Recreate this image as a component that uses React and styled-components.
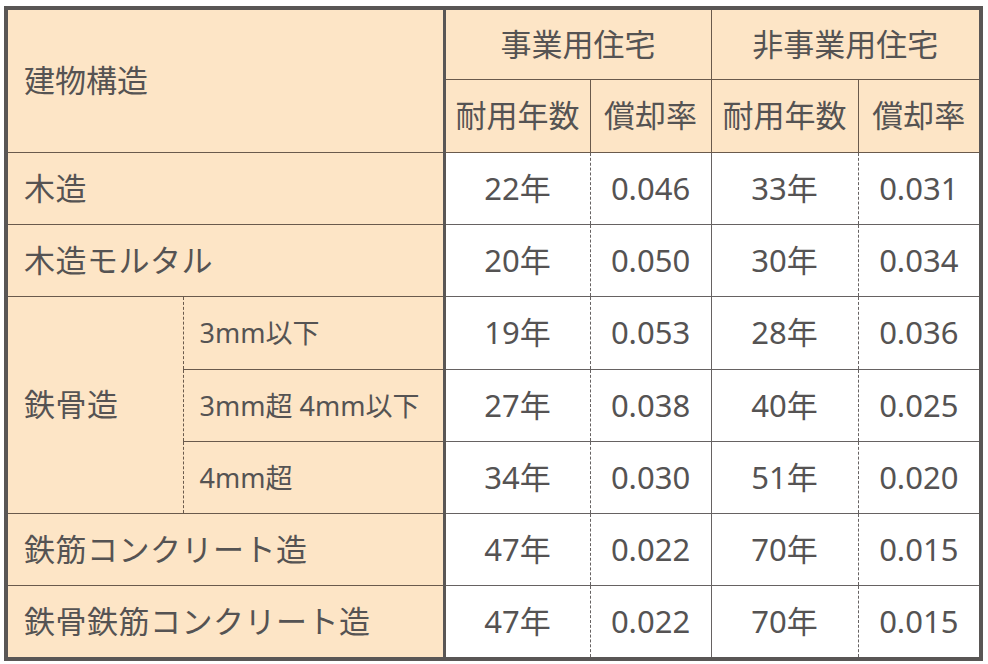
import React from 'react';
import styled, { createGlobalStyle } from 'styled-components';

const GlobalStyle = createGlobalStyle`
  html, body {
    margin: 0;
    padding: 0;
    background: #ffffff;
  }
  body {
    font-family: "Noto Sans", "Noto Sans CJK JP", sans-serif;
    color: #555353;
  }
`;

const Wrapper = styled.div`
  padding: 6px 0 0 4px;
  width: 988px;
  height: 664px;
  box-sizing: border-box;
`;

const Table = styled.table`
  border-collapse: collapse;
  table-layout: fixed;
  width: 975px;
  border: 4px solid #595655;
`;

const Row = styled.tr`
  height: ${props => props.h || 72}px;
`;

const Head = styled.th`
  background: #fde5c6;
  font-weight: normal;
  font-size: 31px;
  text-align: ${props => (props.left ? 'left' : 'center')};
  padding: ${props => (props.left ? '0 0 0 16px' : '0')};
  border: 1px solid #6a5a4c;
  border-right: ${props =>
    props.thick ? '3px solid #595655' : props.dashed ? '1px dashed #6a5a4c' : '1px solid #6a5a4c'};
  line-height: 1;
`;

const Label = styled.td`
  background: #fde5c6;
  font-size: ${props => (props.sub ? 27 : 31)}px;
  letter-spacing: ${props => (props.sub ? 0 : 0.5)}px;
  padding: 0 0 0 16px;
  border-top: 1px solid #6a5a4c;
  border-bottom: 1px solid #6a5a4c;
  border-left: ${props => (props.inner ? '1px dashed #6a5a4c' : 'none')};
  border-right: ${props => (props.thick ? '3px solid #595655' : '1px dashed #6a5a4c')};
  white-space: nowrap;
  line-height: 1;
`;

const Cell = styled.td`
  background: #ffffff;
  font-size: 31px;
  text-align: center;
  border-top: 1px solid #666262;
  border-bottom: 1px solid #666262;
  border-right: ${props => (props.dashed ? '1px dashed #666262' : '1px solid #666262')};
  line-height: 1;
`;

const rows = [
  { label: '木造', h: 72, values: ['22年', '0.046', '33年', '0.031'] },
  { label: '木造モルタル', h: 72, values: ['20年', '0.050', '30年', '0.034'] },
  { label: '鉄骨造', sub: '3mm以下', span: 3, h: 73, values: ['19年', '0.053', '28年', '0.036'] },
  { sub: '3mm超 4mm以下', h: 72, values: ['27年', '0.038', '40年', '0.025'] },
  { sub: '4mm超', h: 72, values: ['34年', '0.030', '51年', '0.020'] },
  { label: '鉄筋コンクリート造', h: 72, values: ['47年', '0.022', '70年', '0.015'] },
  { label: '鉄骨鉄筋コンクリート造', h: 74, values: ['47年', '0.022', '70年', '0.015'] },
];

const DataCells = ({ values }) => (
  <>
    <Cell dashed>{values[0]}</Cell>
    <Cell>{values[1]}</Cell>
    <Cell dashed>{values[2]}</Cell>
    <Cell>{values[3]}</Cell>
  </>
);

const App = () => (
  <>
    <GlobalStyle />
    <Wrapper>
      <Table>
        <colgroup>
          <col style={{ width: 177 }} />
          <col style={{ width: 261 }} />
          <col style={{ width: 146 }} />
          <col style={{ width: 121 }} />
          <col style={{ width: 147 }} />
          <col style={{ width: 123 }} />
        </colgroup>
        <thead>
          <Row h={71}>
            <Head left colSpan={2} rowSpan={2} thick>建物構造</Head>
            <Head colSpan={2}>事業用住宅</Head>
            <Head colSpan={2}>非事業用住宅</Head>
          </Row>
          <Row h={73}>
            <Head dashed>耐用年数</Head>
            <Head>償却率</Head>
            <Head dashed>耐用年数</Head>
            <Head>償却率</Head>
          </Row>
        </thead>
        <tbody>
          {rows.map((r, i) => (
            <Row key={i} h={r.h}>
              {r.label && !r.sub && (
                <Label colSpan={2} thick>{r.label}</Label>
              )}
              {r.label && r.sub && (
                <Label rowSpan={r.span}>{r.label}</Label>
              )}
              {r.sub && (
                <Label sub inner thick>{r.sub}</Label>
              )}
              <DataCells values={r.values} />
            </Row>
          ))}
        </tbody>
      </Table>
    </Wrapper>
  </>
);

export default App;
